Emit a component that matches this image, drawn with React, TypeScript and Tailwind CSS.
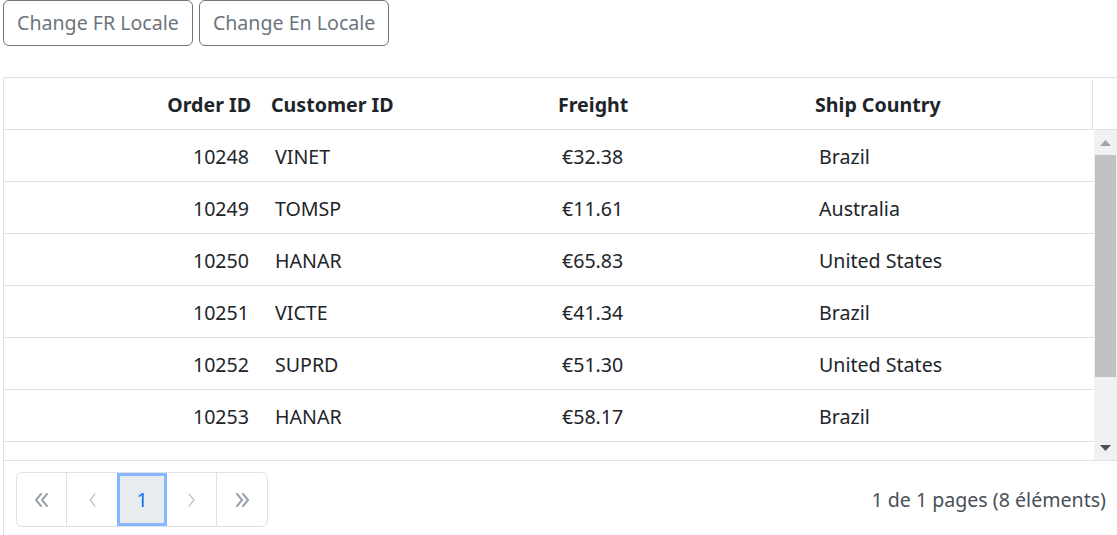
const rows = [
  {id: 10248, customer: 'VINET', freight: '€32.38', country: 'Brazil'},
  {id: 10249, customer: 'TOMSP', freight: '€11.61', country: 'Australia'},
  {id: 10250, customer: 'HANAR', freight: '€65.83', country: 'United States'},
  {id: 10251, customer: 'VICTE', freight: '€41.34', country: 'Brazil'},
  {id: 10252, customer: 'SUPRD', freight: '€51.30', country: 'United States'},
  {id: 10253, customer: 'HANAR', freight: '€58.17', country: 'Brazil'},
]

function LocaleButton({label}: {label: string}) {
  return (
    <button
      type="button"
      className="h-[46px] rounded-[6px] border border-[#6c757d] px-[13px] text-[19.6px] text-[#6c757d]"
    >
      {label}
    </button>
  )
}

function Chevron({dir, double, color, width}: {dir: 'l' | 'r'; double?: boolean; color: string; width: number}) {
  const one = dir === 'l' ? 'M7 1 L2 7 L7 13' : 'M2 1 L7 7 L2 13'
  const two = dir === 'l' ? 'M13 1 L8 7 L13 13' : 'M8 1 L13 7 L8 13'
  return (
    <svg width={double ? 15 : 9} height="14" viewBox={double ? '0 0 15 14' : '0 0 9 14'} fill="none">
      <path d={one} stroke={color} strokeWidth={width} strokeLinecap="round" strokeLinejoin="round" />
      {double && <path d={two} stroke={color} strokeWidth={width} strokeLinecap="round" strokeLinejoin="round" />}
    </svg>
  )
}

export default function App() {
  return (
    <div
      className="h-[535px] w-[1117px] overflow-hidden bg-white text-[#212529]"
      style={{fontFamily: '"Noto Sans", "Open Sans", sans-serif'}}
    >
      <div className="ml-[3px] flex gap-[6px]">
        <LocaleButton label="Change FR Locale" />
        <LocaleButton label="Change En Locale" />
      </div>

      {/* Grid */}
      <div className="ml-[3px] mt-[31px] h-[500px] border-l border-t border-[#dee2e6]">
        {/* Header */}
        <div className="flex h-[52px] border-b border-[#dee2e6] pt-[2px] text-[19.6px] font-bold">
          <div className="flex w-[257px] items-center justify-end pr-[10px]">Order ID</div>
          <div className="flex w-[287px] items-center pl-[10px]">Customer ID</div>
          <div className="flex w-[257px] items-center pl-[10px]">Freight</div>
          <div className="flex w-[288px] items-center border-r border-[#dee2e6] pl-[10px]">Ship Country</div>
          <div className="flex-1" />
        </div>

        {/* Body */}
        <div className="flex h-[331px] border-b border-[#dee2e6]">
          <div className="w-[1090px] overflow-hidden text-[19.6px]">
            {rows.map((r) => (
              <div key={r.id} className="flex h-[52px] border-b border-[#dee2e6] pt-[2px]">
                <div className="flex w-[257px] items-center justify-end pr-[12px]">{r.id}</div>
                <div className="flex w-[287px] items-center pl-[14px]">{r.customer}</div>
                <div className="flex w-[257px] items-center pl-[14px]">{r.freight}</div>
                <div className="flex w-[289px] items-center pl-[14px]">{r.country}</div>
              </div>
            ))}
          </div>
          {/* Scrollbar */}
          <div className="flex w-[23px] flex-col items-center bg-[#f1f1f1]">
            <div className="flex h-[25px] items-center justify-center">
              <svg width="11" height="6" viewBox="0 0 11 6">
                <path d="M0 6 L5.5 0 L11 6 Z" fill="#a3a3a3" />
              </svg>
            </div>
            <div className="h-[222px] w-[21px] bg-[#c1c1c1]" />
            <div className="flex-1" />
            <div className="flex h-[25px] items-center justify-center">
              <svg width="11" height="6" viewBox="0 0 11 6">
                <path d="M0 0 L11 0 L5.5 6 Z" fill="#505050" />
              </svg>
            </div>
          </div>
        </div>

        {/* Pager */}
        <div className="flex items-center justify-between pl-[12px] pr-[11px] pt-[11px]">
          <div className="flex h-[55px] rounded-[6px] border border-[#dee2e6]">
            <div className="flex w-[50px] items-center justify-center border-r border-[#dee2e6]">
              <Chevron dir="l" double color="#9aa2ac" width={2} />
            </div>
            <div className="flex w-[50px] items-center justify-center">
              <Chevron dir="l" color="#bfc6ce" width={1.3} />
            </div>
            <div className="flex w-[50px] items-center justify-center border-[3px] border-[#86b7fe] bg-[#e9ecef] text-[19.6px] text-[#0d6efd]">
              1
            </div>
            <div className="flex w-[50px] items-center justify-center border-r border-[#dee2e6]">
              <Chevron dir="r" color="#bfc6ce" width={1.3} />
            </div>
            <div className="flex w-[50px] items-center justify-center">
              <Chevron dir="r" double color="#9aa2ac" width={2} />
            </div>
          </div>
          <div className="text-[19.6px] text-[#495057]">1 de 1 pages (8 éléments)</div>
        </div>
      </div>
    </div>
  )
}
